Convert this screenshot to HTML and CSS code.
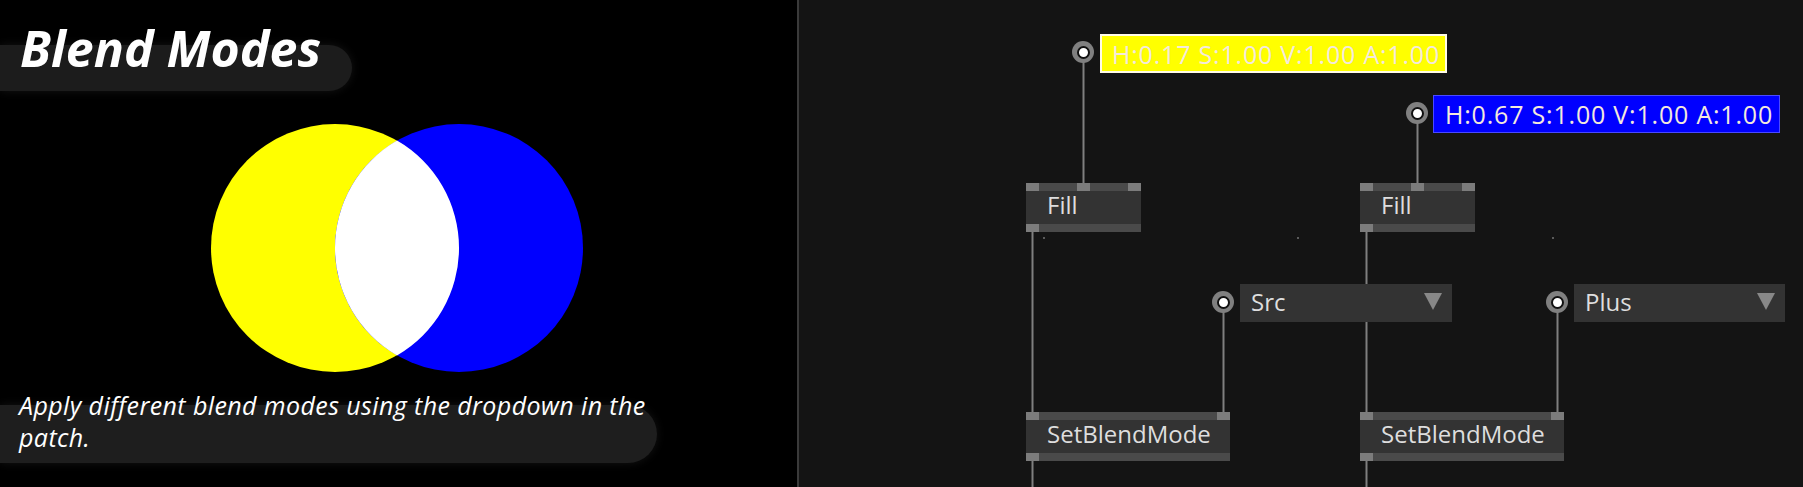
FILE: index.html
```html
<!DOCTYPE html>
<html>
<head>
<meta charset="utf-8">
<link rel="stylesheet" href="styles.css">
</head>
<body>
<div class="app">
  <section class="preview">
    <div class="title-bar"><h1 class="title">Blend Modes</h1></div>
    <svg class="venn" width="372" height="248" viewBox="0 0 372 248">
      <circle cx="124" cy="124" r="124" fill="#ffff00"/>
      <circle cx="248" cy="124" r="124" fill="#0000ff"/>
      <path d="M186 16.6 A124 124 0 0 1 186 231.4 A124 124 0 0 1 186 16.6 Z" fill="#ffffff"/>
    </svg>
    <div class="desc-bar"><p class="desc">Apply different blend modes using the dropdown in the<br>patch.</p></div>
  </section>
  <div class="divider"></div>
  <section class="patch">
    <svg class="wires" width="1004" height="487">
      <g stroke="#7f7f7f" stroke-width="2">
        <line x1="284.5" y1="52" x2="284.5" y2="184"/>
        <line x1="618.5" y1="113" x2="618.5" y2="184"/>
        <line x1="233.5" y1="232" x2="233.5" y2="413"/>
        <line x1="567.5" y1="232" x2="567.5" y2="413"/>
        <line x1="424.5" y1="302" x2="424.5" y2="413"/>
        <line x1="758.5" y1="302" x2="758.5" y2="413"/>
        <line x1="233.5" y1="460" x2="233.5" y2="487"/>
        <line x1="567.5" y1="460" x2="567.5" y2="487"/>
      </g>
      <g fill="#5a5a5a">
        <rect x="244" y="237" width="2" height="2"/>
        <rect x="498" y="237" width="2" height="2"/>
        <rect x="753" y="237" width="2" height="2"/>
      </g>
    </svg>

    <div class="pin" style="left:273px;top:41px"></div>
    <div class="color-box yellow" style="left:301px;top:34px">H:0.17 S:1.00 V:1.00 A:1.00</div>

    <div class="pin" style="left:607px;top:102px"></div>
    <div class="color-box blue" style="left:634px;top:95px">H:0.67 S:1.00 V:1.00 A:1.00</div>

    <div class="node fill" style="left:227px;top:183px">
      <div class="bar"><span class="p"></span><span class="p"></span><span class="p"></span></div>
      <div class="body">Fill</div>
      <div class="bar"><span class="p"></span></div>
    </div>
    <div class="node fill" style="left:561px;top:183px">
      <div class="bar"><span class="p"></span><span class="p"></span><span class="p"></span></div>
      <div class="body">Fill</div>
      <div class="bar"><span class="p"></span></div>
    </div>

    <div class="pin" style="left:413px;top:291px"></div>
    <div class="dropdown" style="left:441px;top:284px;width:212px"><span>Src</span><span class="arrow"></span></div>

    <div class="pin" style="left:747px;top:291px"></div>
    <div class="dropdown" style="left:775px;top:284px;width:211px"><span>Plus</span><span class="arrow"></span></div>

    <div class="node sbm" style="left:227px;top:412px">
      <div class="bar"><span class="p"></span><span class="p"></span></div>
      <div class="body">SetBlendMode</div>
      <div class="bar"><span class="p"></span></div>
    </div>
    <div class="node sbm" style="left:561px;top:412px">
      <div class="bar"><span class="p"></span><span class="p"></span></div>
      <div class="body">SetBlendMode</div>
      <div class="bar"><span class="p"></span></div>
    </div>
  </section>
</div>
</body>
</html>
```

FILE: styles.css
```css
html, body {
  margin: 0;
  padding: 0;
  background: #000;
  overflow: hidden;
}
.app {
  display: flex;
  width: 1803px;
  height: 487px;
}
.preview {
  width: 797px;
  flex: none;
  background: #000;
  display: flex;
  flex-direction: column;
  align-items: flex-start;
  font-family: "Open Sans", "Noto Sans", sans-serif;
}
.title-bar {
  margin-top: 45px;
  width: 352px;
  height: 46px;
  background: #1c1c1c;
  border-radius: 0 23px 23px 0;
  box-shadow: 0 0 10px rgba(40, 40, 40, 0.5);
}
.title {
  margin: -27px 0 0 20px;
  font-style: italic;
  font-weight: 700;
  font-size: 50px;
  line-height: 60px;
  color: #fff;
  white-space: nowrap;
}
.venn {
  display: block;
  margin: 33px 0 0 211px;
}
.desc-bar {
  margin-top: 33px;
  width: 657px;
  height: 58px;
  background: #1e1e1e;
  border-radius: 0 29px 29px 0;
  box-shadow: 0 0 10px rgba(40, 40, 40, 0.5);
}
.desc {
  margin: -16px 0 0 19px;
  font-style: italic;
  font-size: 25px;
  letter-spacing: 0.4px;
  line-height: 32px;
  color: #fff;
  white-space: nowrap;
}
.divider {
  width: 2px;
  flex: none;
  background: #3a3a3a;
}
.patch {
  flex: 1;
  position: relative;
  background: #141414;
  font-family: "Open Sans", "Noto Sans", sans-serif;
}
.wires {
  position: absolute;
  left: 0;
  top: 0;
}
.pin {
  position: absolute;
  width: 22px;
  height: 22px;
  border-radius: 50%;
  background: #808080;
  display: flex;
  align-items: center;
  justify-content: center;
}
.pin::after {
  content: "";
  width: 9px;
  height: 9px;
  border-radius: 50%;
  background: #fff;
  border: 2px solid #111;
}
.color-box {
  position: absolute;
  box-sizing: border-box;
  width: 347px;
  padding-left: 10px;
  font-size: 25px;
  letter-spacing: 0.8px;
  color: #f4e9dd;
  white-space: nowrap;
  display: flex;
  align-items: center;
}
.color-box.yellow {
  height: 39px;
  background: #ffff00;
  border: 2px solid #fffbe8;
}
.color-box.blue {
  height: 38px;
  background: #0000ff;
  border: 1px solid #4a4aff;
  padding-left: 11px;
}
.node {
  position: absolute;
  display: flex;
  flex-direction: column;
  height: 49px;
}
.node.fill { width: 115px; }
.node.sbm { width: 204px; }
.node .bar {
  height: 8px;
  background: #4a4a4a;
  display: flex;
  justify-content: space-between;
}
.node .p {
  width: 13px;
  height: 8px;
  background: #7c7c7c;
}
.node .body {
  height: 33px;
  background: #333;
  color: #dedede;
  font-size: 24px;
  line-height: 27px;
  padding-left: 21px;
  white-space: nowrap;
}
.dropdown {
  position: absolute;
  height: 38px;
  box-sizing: border-box;
  background: #333;
  color: #dedede;
  font-size: 24px;
  padding: 0 10px 3px 11px;
  display: flex;
  align-items: center;
  justify-content: space-between;
}
.dropdown .arrow {
  width: 0;
  height: 0;
  border-left: 9px solid transparent;
  border-right: 9px solid transparent;
  border-top: 17px solid #888;
}
```
